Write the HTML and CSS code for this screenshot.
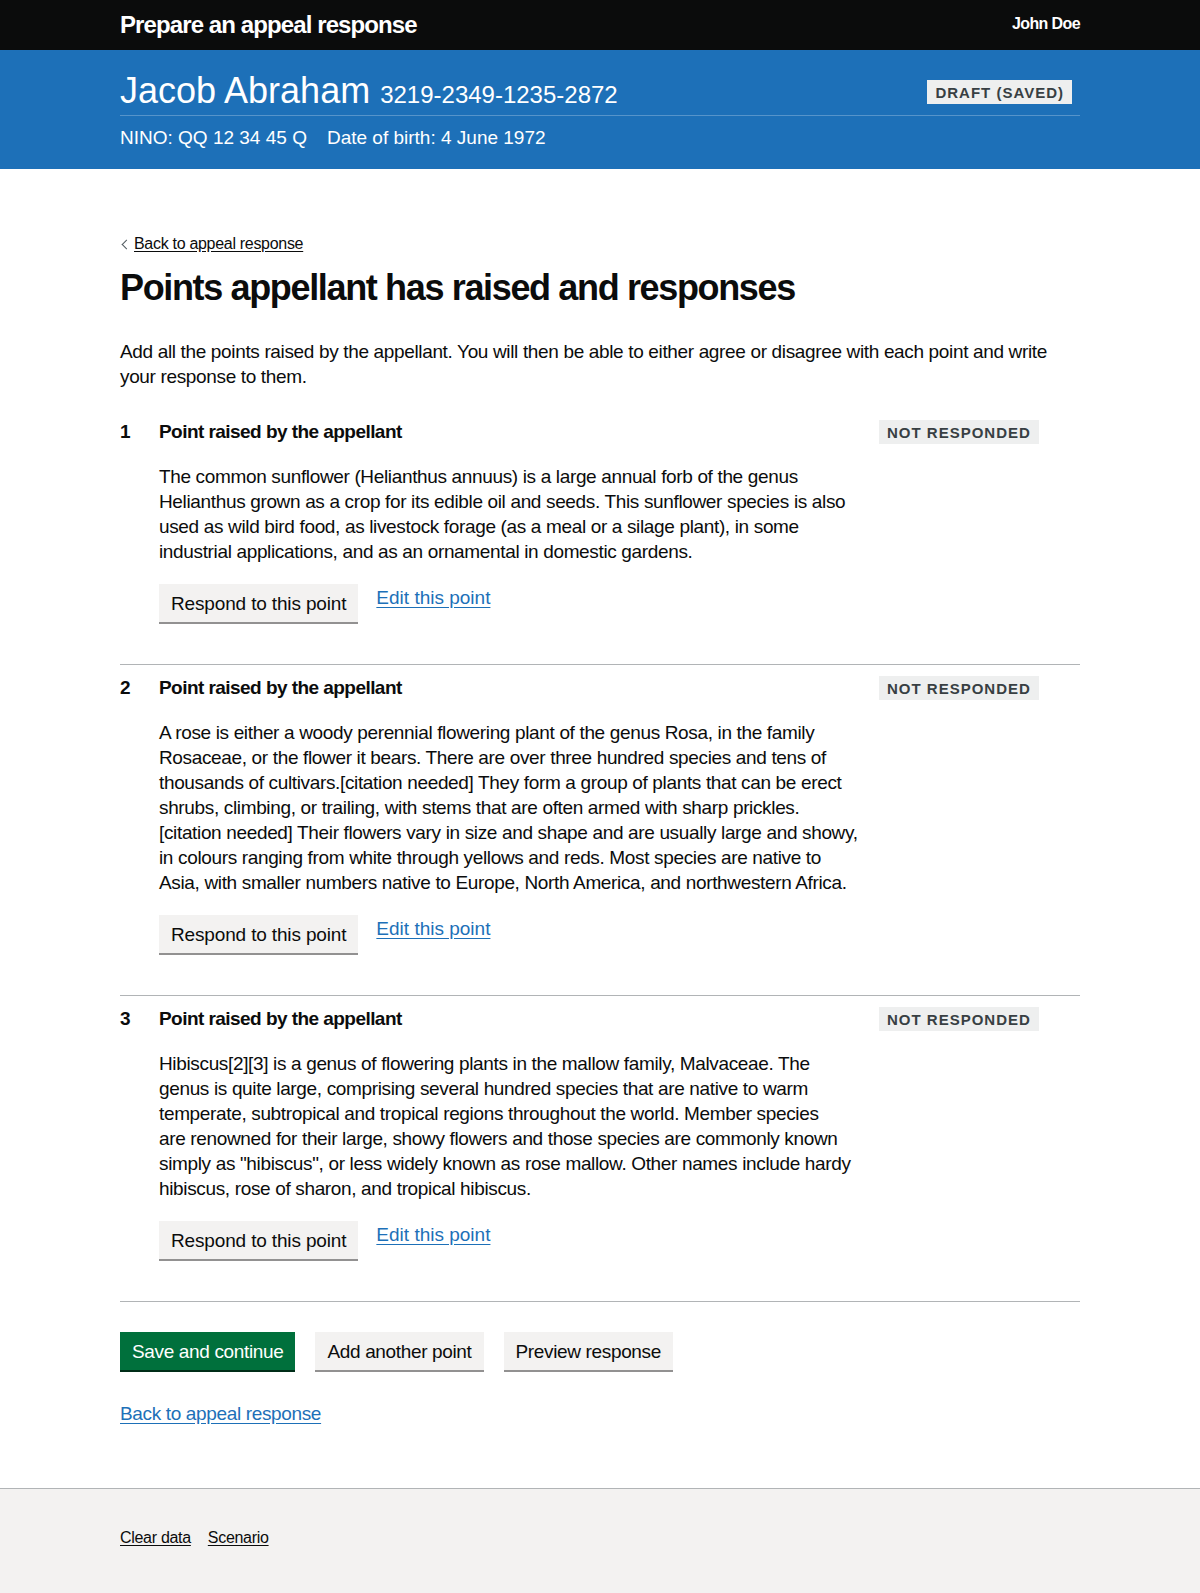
FILE: index.html
```html
<!DOCTYPE html>
<html lang="en">
<head>
<meta charset="utf-8">
<title>Points appellant has raised and responses</title>
<link rel="stylesheet" href="styles.css">
</head>
<body>
<header class="topbar">
  <div class="container topbar-inner">
    <span class="service">Prepare an appeal response</span>
    <span class="user">John Doe</span>
  </div>
</header>
<div class="banner">
  <div class="container">
    <div class="banner-top">
      <h2 class="claimant">Jacob Abraham <span class="ref">3219-2349-1235-2872</span></h2>
      <strong class="tag tag-draft">Draft (saved)</strong>
    </div>
    <p class="banner-meta"><span>NINO: QQ 12 34 45 Q</span><span>Date of birth: 4 June 1972</span></p>
  </div>
</div>
<main class="container main">
  <a href="#" class="back-link">Back to appeal response</a>
  <h1 class="title">Points appellant has raised and responses</h1>
  <p class="lead">Add all the points raised by the appellant. You will then be able to either agree or disagree with each point and write your response to them.</p>
  <ol class="points">
    <li class="point">
      <span class="num">1</span>
      <div class="point-body">
        <h2 class="point-title">Point raised by the appellant</h2>
        <p class="point-text">The common sunflower (Helianthus annuus) is a large annual forb of the genus Helianthus grown as a crop for its edible oil and seeds. This sunflower species is also used as wild bird food, as livestock forage (as a meal or a silage plant), in some industrial applications, and as an ornamental in domestic gardens.</p>
        <div class="actions"><button class="btn btn-point">Respond to this point</button><a class="link link-edit" href="#">Edit this point</a></div>
      </div>
      <strong class="tag">Not responded</strong>
    </li>
    <li class="point">
      <span class="num">2</span>
      <div class="point-body">
        <h2 class="point-title">Point raised by the appellant</h2>
        <p class="point-text">A rose is either a woody perennial flowering plant of the genus Rosa, in the family Rosaceae, or the flower it bears. There are over three hundred species and tens of thousands of cultivars.[citation needed] They form a group of plants that can be erect shrubs, climbing, or trailing, with stems that are often armed with sharp prickles.[citation needed] Their flowers vary in size and shape and are usually large and showy, in colours ranging from white through yellows and reds. Most species are native to Asia, with smaller numbers native to Europe, North America, and northwestern Africa.</p>
        <div class="actions"><button class="btn btn-point">Respond to this point</button><a class="link link-edit" href="#">Edit this point</a></div>
      </div>
      <strong class="tag">Not responded</strong>
    </li>
    <li class="point">
      <span class="num">3</span>
      <div class="point-body">
        <h2 class="point-title">Point raised by the appellant</h2>
        <p class="point-text">Hibiscus[2][3] is a genus of flowering plants in the mallow family, Malvaceae. The genus is quite large, comprising several hundred species that are native to warm temperate, subtropical and tropical regions throughout the world. Member species are&nbsp;renowned for their large, showy flowers and those species are commonly known simply as "hibiscus", or less widely known as rose mallow. Other names include hardy hibiscus, rose of sharon, and tropical hibiscus.</p>
        <div class="actions"><button class="btn btn-point">Respond to this point</button><a class="link link-edit" href="#">Edit this point</a></div>
      </div>
      <strong class="tag">Not responded</strong>
    </li>
  </ol>
  <div class="form-actions">
    <button class="btn btn-primary">Save and continue</button>
    <button class="btn">Add another point</button>
    <button class="btn">Preview response</button>
  </div>
  <p class="bottom-link"><a class="link" href="#">Back to appeal response</a></p>
</main>
<footer class="footer">
  <div class="container footer-links">
    <a href="#">Clear data</a>
    <a href="#">Scenario</a>
  </div>
</footer>
</body>
</html>
```
FILE: styles.css
```css
* { box-sizing: border-box; }

body {
  margin: 0;
  font-family: "Liberation Sans", Arial, sans-serif;
  color: #0b0c0c;
  background: #fff;
}

.container {
  width: 960px;
  margin: 0 auto;
}

/* top bar */
.topbar {
  background: #0b0c0c;
  color: #fff;
}
.topbar-inner {
  display: flex;
  justify-content: space-between;
  align-items: center;
  height: 50px;
}
.service {
  font-weight: 700;
  font-size: 24px;
  line-height: 30px;
  letter-spacing: -0.9px;
}
.user {
  font-weight: 700;
  font-size: 16px;
  letter-spacing: -0.6px;
  margin-top: -2px;
}

/* blue banner */
.banner {
  background: #1d70b8;
  color: #fff;
  padding: 20px 0 19.5px;
}
.banner-top {
  display: flex;
  justify-content: space-between;
  align-items: center;
  height: 46px;
  padding-bottom: 5px;
  border-bottom: 1px solid #5694ca;
}
.claimant {
  margin: 0;
  font-weight: 400;
  font-size: 36px;
  line-height: 40px;
  margin-top: 2px;
}
.ref {
  font-size: 24px;
  line-height: 1;
}
.banner-meta {
  margin: 8.5px 0 0;
  font-size: 19px;
  line-height: 25px;
  display: flex;
  gap: 20px;
}

/* tags */
.tag {
  display: inline-block;
  background: #eeefef;
  color: #383f43;
  font-weight: 700;
  font-size: 15px;
  line-height: 15px;
  letter-spacing: 1px;
  text-transform: uppercase;
  padding: 5px 8px 4px 8px;
}
.tag-draft {
  margin-top: 4px;
  margin-right: 8px;
}

/* main */
.main {
  padding: 65px 0 60.5px;
}
.back-link {
  display: inline-block;
  position: relative;
  padding-left: 14px;
  font-size: 16px;
  line-height: 20px;
  color: #0b0c0c;
  text-decoration: underline;
  text-underline-offset: 2px;
  letter-spacing: -0.3px;
  margin-bottom: 14px;
}
.back-link::before {
  content: "";
  position: absolute;
  left: 3px;
  top: 7px;
  width: 6px;
  height: 6px;
  border-left: 1px solid #505a5f;
  border-bottom: 1px solid #505a5f;
  transform: rotate(45deg);
}
.title {
  margin: 0 0 31px;
  font-size: 36px;
  line-height: 40px;
  font-weight: 700;
  letter-spacing: -1.35px;
}
.lead {
  margin: 0 0 29.5px;
  font-size: 19px;
  line-height: 25px;
  letter-spacing: -0.35px;
}

/* points */
.points {
  list-style: none;
  margin: 0;
  padding: 0;
}
.point {
  display: grid;
  grid-template-columns: 39px 720px 1fr;
  align-items: start;
  padding: 0 0 42px;
  border-bottom: 1px solid #b1b4b6;
}
.point + .point {
  padding-top: 10px;
}
.num {
  font-weight: 700;
  font-size: 19px;
  line-height: 25px;
}
.point-body {
  padding-right: 20px;
}
.point-title {
  margin: 0 0 20px;
  font-size: 19px;
  line-height: 25px;
  font-weight: 700;
  letter-spacing: -0.55px;
}
.point-text {
  margin: 0 0 20px;
  font-size: 19px;
  line-height: 25px;
  letter-spacing: -0.35px;
}
.point .tag {
  justify-self: start;
  margin-top: 1.5px;
}
.actions {
  display: flex;
  align-items: flex-start;
  gap: 18px;
}

/* buttons */
.btn {
  font-family: inherit;
  font-size: 19px;
  line-height: 19px;
  letter-spacing: -0.35px;
  padding: 8px 10px 7px;
  border: 2px solid transparent;
  border-radius: 0;
  background: #f3f2f1;
  color: #0b0c0c;
  box-shadow: 0 2px 0 #929191;
  cursor: pointer;
}
.btn-point {
  letter-spacing: -0.15px;
}
.btn-primary {
  background: #00703c;
  color: #fff;
  box-shadow: 0 2px 0 #002d18;
}
.link {
  font-size: 19px;
  line-height: 25px;
  letter-spacing: -0.35px;
  color: #1d70b8;
  text-decoration: underline;
  text-underline-offset: 3px;
  margin-top: 1.5px;
}
.link-edit {
  letter-spacing: 0;
}

.form-actions {
  display: flex;
  gap: 20px;
  margin-top: 30px;
}
.bottom-link {
  margin: 31.5px 0 0;
  line-height: 25px;
}

/* footer */
.footer {
  background: #f3f2f1;
  border-top: 1px solid #b1b4b6;
  padding: 39px 0 46px;
}
.footer-links {
  display: flex;
  gap: 17px;
}
.footer-links a {
  font-size: 16px;
  line-height: 20px;
  color: #0b0c0c;
  text-decoration: underline;
  text-underline-offset: 2px;
  letter-spacing: -0.3px;
}
```
